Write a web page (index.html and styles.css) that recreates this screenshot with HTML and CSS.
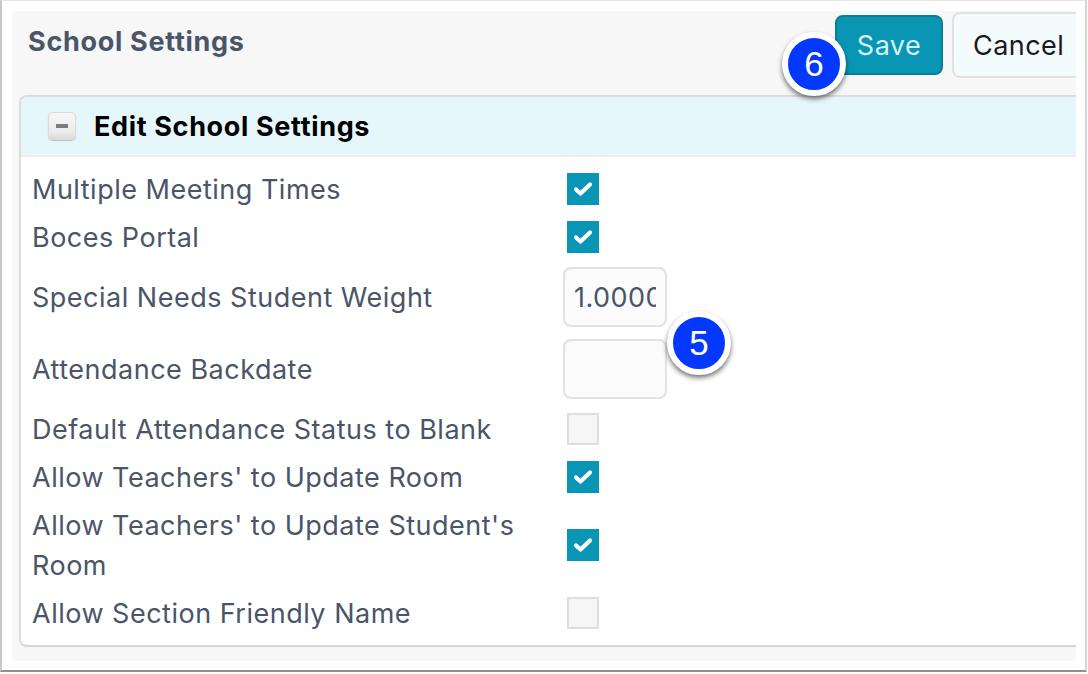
FILE: index.html
```html
<!DOCTYPE html>
<html lang="en">
<head>
<meta charset="utf-8">
<title>School Settings</title>
<link rel="stylesheet" href="styles.css">
</head>
<body>
<div class="frame">
  <main class="panel">
    <header class="topbar">
      <h1 class="page-title">School Settings</h1>
      <div class="actions">
        <button class="btn btn-save" type="button">Save</button>
        <button class="btn btn-cancel" type="button">Cancel</button>
      </div>
    </header>
    <section class="card">
      <div class="card-head">
        <span class="toggle"><span class="toggle-bar"></span></span>
        <h2 class="card-title">Edit School Settings</h2>
      </div>
      <div class="form">
        <div class="row"><span class="label">Multiple Meeting Times</span><span class="box checked"><svg class="tick" viewBox="0 0 20 16"><path d="M3 8.5 7.5 12.5 17 3.5"/></svg></span></div>
        <div class="row"><span class="label">Boces Portal</span><span class="box checked"><svg class="tick" viewBox="0 0 20 16"><path d="M3 8.5 7.5 12.5 17 3.5"/></svg></span></div>
        <div class="row row-input"><span class="label">Special Needs Student Weight</span><input class="field" type="text" value="1.0000" readonly></div>
        <div class="row row-input"><span class="label">Attendance Backdate</span><input class="field" type="text" value="" readonly></div>
        <div class="row"><span class="label">Default Attendance Status to Blank</span><span class="box"></span></div>
        <div class="row"><span class="label">Allow Teachers' to Update Room</span><span class="box checked"><svg class="tick" viewBox="0 0 20 16"><path d="M3 8.5 7.5 12.5 17 3.5"/></svg></span></div>
        <div class="row"><span class="label">Allow Teachers' to Update Student's Room</span><span class="box checked"><svg class="tick" viewBox="0 0 20 16"><path d="M3 8.5 7.5 12.5 17 3.5"/></svg></span></div>
        <div class="row"><span class="label">Allow Section Friendly Name</span><span class="box"></span></div>
      </div>
    </section>
  </main>
  <span class="badge badge-5">5</span>
  <span class="badge badge-6">6</span>
</div>
</body>
</html>
```
FILE: styles.css
```css
* { box-sizing: border-box; }
html, body { margin: 0; padding: 0; background: #fff; }
body { width: 1088px; height: 674px; overflow: hidden; font-family: Inter, "Liberation Sans", sans-serif; }
.frame {
  position: relative;
  width: 1087px;
  height: 672px;
  padding: 10px 9px 10px 10px;
  border-top: 1px solid #e6e6e6;
  border-left: 2px solid #c8c8c8;
  border-right: 2px solid #d4d4d4;
  border-bottom: 2px solid #8f8f8f;
  background: #fff;
}
.panel { height: 650px; width: 1064px; background: #f7f7f7; overflow: hidden; padding: 0 0 14px 7px; }
.topbar { display: flex; height: 84px; align-items: flex-start; }
.page-title { margin: 14px 0 0 9px; font-size: 27px; line-height: 33px; font-weight: 700; letter-spacing: .7px; color: #4a5568; }
.actions { margin-left: auto; margin-right: -60px; margin-top: 1px; display: flex; gap: 9px; align-items: center; }
.btn { font: 400 27px/1 Inter, "Liberation Sans", sans-serif; letter-spacing: .45px; border-radius: 8px; padding: 0; }
.btn-save { width: 108px; height: 60px; background: #0896b4; border: 2px solid #0a7d98; color: #d5f3f9; }
.btn-cancel { width: 184px; height: 66px; background: #f3fbfd; border: 2px solid #e2e2e2; color: #1a1a1a; text-align: left; padding-left: 19px; }
.card {
  background: #fff;
  border-top: 2px solid #dcdcdc;
  border-left: 2px solid #dcdcdc;
  border-bottom: 2px solid #d6d6d6;
  border-radius: 8px 0 0 8px;
  height: 552px;
  overflow: hidden;
}
.card-head { display: flex; align-items: center; height: 60px; padding-left: 27px; gap: 18px; background: #e6f7fc; border-bottom: 2px solid #eaeef0; }
.toggle {
  width: 28px; height: 28px; border-radius: 5px;
  display: flex; align-items: center; justify-content: center;
  background: linear-gradient(#f7f7f7, #ececec 70%, #d8d8d8);
  box-shadow: inset 0 0 0 1px #dadada, 0 1px 1px #bdbdbd;
}
.toggle-bar { width: 12px; height: 4px; background: #7c7c7c; }
.card-title { margin: 0; font-size: 27px; line-height: 33px; font-weight: 700; letter-spacing: .65px; color: #000; }
.form { padding-top: 8px; }
.row { display: flex; align-items: center; padding: 4px 0 4px 11px; min-height: 48px; }
.row-input { min-height: 72px; }
.label { width: 535px; margin: 1px 0 -1px; padding-right: 20px; font-size: 27px; line-height: 40px; letter-spacing: .5px; color: #4a5568; }
.box { width: 32px; height: 32px; background: #f6f6f6; border: 2px solid #dedede; display: flex; align-items: center; justify-content: center; }
.box.checked { background: #0896b4; border: 0; }
.tick { width: 20px; height: 16px; fill: none; stroke: #fff; stroke-width: 4.2; stroke-linecap: round; stroke-linejoin: round; }
.field {
  width: 104px; height: 60px; margin-left: -4px;
  border: 2px solid #e2e2e2; border-radius: 8px; background: #fbfbfb;
  font: 400 27px Inter, "Liberation Sans", sans-serif; letter-spacing: .45px; color: #4a5568;
  padding: 0 9px; outline: 0;
}
.badge {
  position: absolute;
  width: 64px; height: 64px; border-radius: 50%;
  display: flex; align-items: center; justify-content: center;
  background: #0438ff; border: 6px solid #fff; color: #fff;
  font-family: "Liberation Sans", sans-serif; font-size: 35px;
  box-shadow: 0 3px 5px rgba(0,0,0,.55);
}
.badge-5 { left: 665px; top: 310px; }
.badge-6 { left: 780px; top: 31px; }
```
